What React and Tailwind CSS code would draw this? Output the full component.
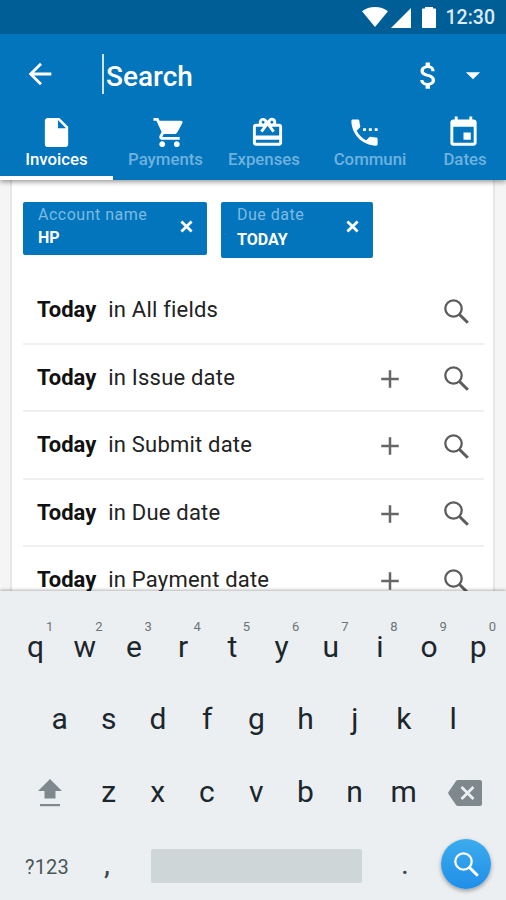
import React, { useState } from 'react';
import {
  MdArrowBack,
  MdArrowDropDown,
  MdAttachMoney,
  MdAdd,
  MdCardGiftcard,
  MdEvent,
  MdInsertDriveFile,
  MdSettingsPhone,
  MdShoppingCart,
} from 'react-icons/md';

const TABS = [
  { id: 'invoices', label: 'Invoices', Icon: MdInsertDriveFile, width: 'w-[113px]', nudge: '' },
  { id: 'payments', label: 'Payments', Icon: MdShoppingCart, width: 'w-[105px]', nudge: 'ml-[7px]' },
  { id: 'expenses', label: 'Expenses', Icon: MdCardGiftcard, width: 'w-[92px]', nudge: 'ml-[7px]' },
  { id: 'communi', label: 'Communi', Icon: MdSettingsPhone, width: 'w-[120px]', nudge: 'mr-[11px]' },
  { id: 'dates', label: 'Dates', Icon: MdEvent, width: 'w-[70px]', nudge: 'mr-[4px]' },
];

const SUGGESTIONS = [
  { field: 'All fields', canAdd: false },
  { field: 'Issue date', canAdd: true },
  { field: 'Submit date', canAdd: true },
  { field: 'Due date', canAdd: true },
  { field: 'Payment date', canAdd: true },
];

const TOP_KEYS = ['q', 'w', 'e', 'r', 't', 'y', 'u', 'i', 'o', 'p'];
const HOME_KEYS = ['a', 's', 'd', 'f', 'g', 'h', 'j', 'k', 'l'];
const BOTTOM_KEYS = ['z', 'x', 'c', 'v', 'b', 'n', 'm'];

function CloseIcon({ className }) {
  return (
    <svg viewBox="0 0 14 14" fill="none" stroke="currentColor" strokeWidth="3" className={className}>
      <path d="M1.5 1.5l11 11M12.5 1.5l-11 11" />
    </svg>
  );
}

function SearchIcon({ className }) {
  return (
    <svg viewBox="0 0 25 25" fill="none" stroke="currentColor" className={className}>
      <circle cx="9.500" cy="9.500" r="8.200" strokeWidth="2.300" />
      <path d="M15.500 15.500l8.300 8.300" strokeWidth="3" />
    </svg>
  );
}

function ShiftIcon({ className }) {
  return (
    <svg viewBox="0 0 26 30" fill="currentColor" className={className}>
      <path d="M13 1L1 13h6.500v7.500h11V13H25z" />
      <path d="M3 26h20v2.200H3z" />
    </svg>
  );
}

function DeleteIcon({ className }) {
  return (
    <svg viewBox="0 0 34 26" className={className}>
      <path d="M10 0h22a2 2 0 012 2v22a2 2 0 01-2 2H10a2.500 2.500 0 01-2-1L.5 14a2 2 0 010-2L8 1a2.500 2.500 0 012-1z" fill="#7f898d" />
      <path d="M13.500 7l12 12M25.500 7l-12 12" stroke="#eceff1" strokeWidth="2.800" />
    </svg>
  );
}

function StatusBar() {
  return (
    <div className="flex h-[34px] items-center justify-end bg-[#005e96] pr-[11px] text-white">
      <svg viewBox="0 0 26 20" fill="currentColor" className="h-5 w-[26px]">
        <path d="M13 20L0 4.200C3.500 1.500 8 0 13 0s9.500 1.500 13 4.200z" />
      </svg>
      <svg viewBox="0 0 20 20" fill="currentColor" className="mt-px ml-[3px] h-5 w-5">
        <path d="M0 20h20V0z" />
      </svg>
      <svg viewBox="0 0 14 21" fill="currentColor" className="mt-px ml-[11px] h-[21px] w-[14px]">
        <path d="M3 0h8v1.500h2c.6 0 1 .4 1 1V20c0 .6-.4 1-1 1H1c-.6 0-1-.4-1-1V2.500c0-.6.4-1 1-1h2z" />
      </svg>
      <span className="ml-[10px] pt-[2px] text-[19.5px] leading-none font-medium text-[#dcebf5]">12:30</span>
    </div>
  );
}

function FilterChip({ label, value, className }) {
  return (
    <div className={`flex items-start rounded-[2px] bg-[#0275bd] ${className}`}>
      <div className="flex-1">
        <div className="pt-[3px] text-[16px] leading-[20px] tracking-[0.5px] text-[#7fbae0]">{label}</div>
        <div className="text-[16px] font-bold text-white">{value}</div>
      </div>
      <CloseIcon className="mt-[18px] mr-[14px] h-[13px] w-[13px] text-white" />
    </div>
  );
}

function SuggestionRow({ field, canAdd }) {
  return (
    <div className="flex h-[67.5px] shrink-0 items-center border-b-2 border-[#efefef] pl-[14px] text-[22px] text-[#222]">
      <span className="font-bold text-[#111]">Today</span>
      <span className="ml-3 flex-1 tracking-[0.2px]">in {field}</span>
      {canAdd && <MdAdd className="mt-[3px] mr-[39px] h-[30px] w-[30px] text-[#666]" />}
      <SearchIcon className="mt-[3px] mr-[15px] h-[25px] w-[25px] text-[#5c5c5c]" />
    </div>
  );
}

function Key({ char, hint }) {
  return (
    <div className="relative w-[49.2px] text-center text-[30px] leading-[73px]">
      {char}
      {hint && <span className="absolute top-[9px] left-[35px] text-[13px] leading-4 text-[#6b7478]">{hint}</span>}
    </div>
  );
}

function Keyboard() {
  return (
    <div className="relative h-[309px] shrink-0 bg-[#eceff1] pt-[18px] text-[#1b272c] shadow-[0_-1px_3px_rgba(0,0,0,0.3)]">
      <div className="flex h-[73px] pt-px pl-[11px]">
        {TOP_KEYS.map((char, i) => (
          <Key key={char} char={char} hint={String((i + 1) % 10)} />
        ))}
      </div>
      <div className="flex h-[73px] pl-[35px]">
        {HOME_KEYS.map(char => (
          <Key key={char} char={char} />
        ))}
      </div>
      <div className="flex h-[73px] items-center pl-[37px]">
        <ShiftIcon className="mt-[3px] mr-[21px] h-[30px] w-[26px] text-[#7f898d]" />
        {BOTTOM_KEYS.map(char => (
          <Key key={char} char={char} />
        ))}
        <DeleteIcon className="mt-[3px] ml-[20px] h-[26px] w-[34px]" />
      </div>
      <div className="flex h-[72px] items-center pl-[25px]">
        <span className="w-[79px] pt-[6px] text-[20px] tracking-[0.2px] text-[#4a5559]">?123</span>
        <span className="w-[47px] text-[30px] leading-none text-[#3a4549]">,</span>
        <div className="mt-[3px] h-[34px] w-[211px] rounded-[2px] bg-[#cfd6d8]" />
        <span className="ml-[39px] w-[40px] text-[30px] leading-none text-[#3a4549]">.</span>
        <button className="flex h-[50px] w-[50px] items-center justify-center rounded-full bg-gradient-to-b from-[#3cacee] to-[#1f8ee8] text-white shadow-[0_2px_4px_rgba(0,0,0,0.35)]">
          <SearchIcon className="ml-px h-[25px] w-[25px]" />
        </button>
      </div>
    </div>
  );
}

export default function App() {
  const [activeTab, setActiveTab] = useState('invoices');

  return (
    <div className="flex h-[900px] w-[506px] flex-col overflow-hidden bg-[#f5f5f5] font-[Roboto,sans-serif]">
      <header className="relative z-10 shrink-0 bg-[#0275bd] shadow-[0_2px_5px_rgba(0,0,0,0.4)]">
        <StatusBar />
        <div className="flex h-[79px] items-center pl-[23px] text-white">
          <MdArrowBack className="h-[34px] w-[34px]" />
          <div className="ml-[45px] h-10 w-[2px] bg-[#cfe5f4]" />
          <span className="ml-[2px] flex-1 pt-[7px] text-[28px] leading-none font-medium">Search</span>
          <MdAttachMoney className="mt-[3px] h-[35px] w-[35px]" />
          <MdArrowDropDown className="mt-[3px] mr-[16px] ml-[10px] h-[34px] w-[34px]" />
        </div>
        <nav className="flex h-[67px]">
          {TABS.map(({ id, label, Icon, width, nudge }) => (
            <button
              key={id}
              onClick={() => setActiveTab(id)}
              className={`flex shrink-0 flex-col items-center border-b-4 pt-[2px] text-[16.8px] leading-[18px] font-medium ${width} ${
                activeTab === id ? 'border-white text-white' : 'border-transparent text-[#6fb2de]'
              }`}
            >
              <Icon className={`h-[35px] w-[35px] shrink-0 text-white ${nudge}`} />
              {label}
            </button>
          ))}
        </nav>
      </header>

      <main className="mr-[11px] ml-[10px] flex min-h-0 flex-1 flex-col overflow-hidden border-x-2 border-[#e6e6e6] bg-white pr-[9px] pl-[11px]">
        <div className="flex h-[97px] shrink-0 items-start gap-[14px] pt-[22px]">
          <FilterChip label="Account name" value="HP" className="h-[53px] w-[184px] pl-[15px] leading-[25px]" />
          <FilterChip label="Due date" value="TODAY" className="h-[56px] w-[152px] pl-[16px] leading-[30px]" />
        </div>
        {SUGGESTIONS.map(item => (
          <SuggestionRow key={item.field} field={item.field} canAdd={item.canAdd} />
        ))}
      </main>

      <Keyboard />
    </div>
  );
}
